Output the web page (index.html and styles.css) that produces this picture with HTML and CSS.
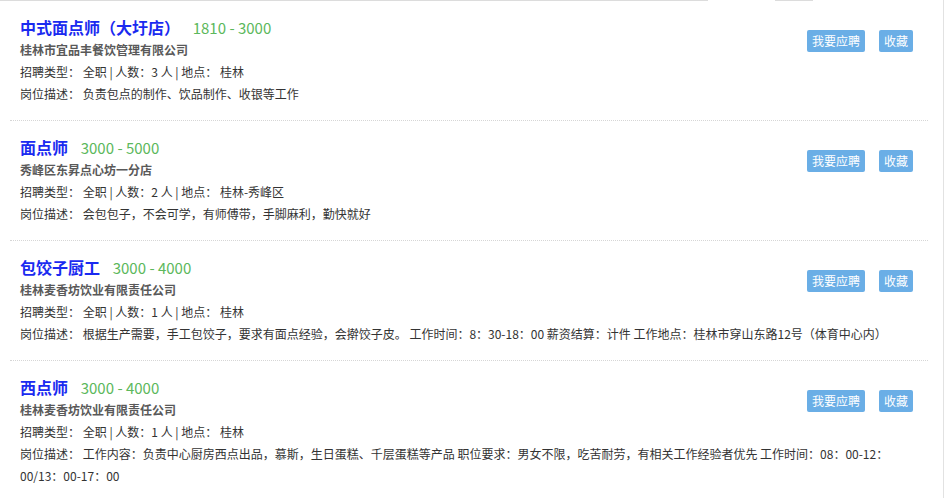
FILE: index.html
```html
<!DOCTYPE html>
<html lang="zh-CN">
<head>
  <meta charset="UTF-8">
  <meta name="viewport" content="width=device-width, initial-scale=1.0">
  <title>招聘信息</title>
  <link rel="stylesheet" href="styles.css">
</head>
<body>

  <div class="page">
    <div class="topline"></div>
    <ul class="job-list">
      <li class="job">
        <div class="actions">
          <a href="#" class="btn">我要应聘</a>
          <a href="#" class="btn">收藏</a>
        </div>
        <div class="job-title">
          <a href="#" class="name">中式面点师（大圩店）</a>
          <span class="salary">1810 - 3000</span>
        </div>
        <div class="company">桂林市宜品丰餐饮管理有限公司</div>
        <div class="line">招聘类型： 全职 | 人数：3 人 | 地点： 桂林</div>
        <div class="line">岗位描述： 负责包点的制作、饮品制作、收银等工作</div>
      </li>

      <li class="job">
        <div class="actions">
          <a href="#" class="btn">我要应聘</a>
          <a href="#" class="btn">收藏</a>
        </div>
        <div class="job-title">
          <a href="#" class="name">面点师</a>
          <span class="salary">3000 - 5000</span>
        </div>
        <div class="company">秀峰区东昇点心坊一分店</div>
        <div class="line">招聘类型： 全职 | 人数：2 人 | 地点： 桂林-秀峰区</div>
        <div class="line">岗位描述： 会包包子，不会可学，有师傅带，手脚麻利，勤快就好</div>
      </li>

      <li class="job">
        <div class="actions">
          <a href="#" class="btn">我要应聘</a>
          <a href="#" class="btn">收藏</a>
        </div>
        <div class="job-title">
          <a href="#" class="name">包饺子厨工</a>
          <span class="salary">3000 - 4000</span>
        </div>
        <div class="company">桂林麦香坊饮业有限责任公司</div>
        <div class="line">招聘类型： 全职 | 人数：1 人 | 地点： 桂林</div>
        <div class="line">岗位描述： 根据生产需要，手工包饺子，要求有面点经验，会擀饺子皮。 工作时间：8：30-18：00 薪资结算：计件 工作地点：桂林市穿山东路12号（体育中心内）</div>
      </li>

      <li class="job">
        <div class="actions">
          <a href="#" class="btn">我要应聘</a>
          <a href="#" class="btn">收藏</a>
        </div>
        <div class="job-title">
          <a href="#" class="name">西点师</a>
          <span class="salary">3000 - 4000</span>
        </div>
        <div class="company">桂林麦香坊饮业有限责任公司</div>
        <div class="line">招聘类型： 全职 | 人数：1 人 | 地点： 桂林</div>
        <div class="line">岗位描述： 工作内容：负责中心厨房西点出品，慕斯，生日蛋糕、千层蛋糕等产品 职位要求：男女不限，吃苦耐劳，有相关工作经验者优先 工作时间：08：00-12：00/13：00-17：00</div>
      </li>
    </ul>
  </div>

</body>
</html>
```

FILE: styles.css
```css
body {
  margin: 0;
  font-family: "Noto Sans CJK SC", "Noto Sans", sans-serif;
  font-size: 12px;
  color: #333;
  background: #fff;
}
.page {
  min-height: 498px;
  border-right: 1px solid #e2e2e2;
}
/* linha cinza do topo */
.topline {
  height: 1px;
  background: linear-gradient(to right, #dcdcdc 0, #dcdcdc 708px, transparent 708px, transparent 775px, #dcdcdc 775px, #dcdcdc 813px, transparent 813px);
}
.job-list {
  list-style: none;
  margin: 0;
  padding: 0 0 0 10px;
  width: 918px;
}
.job {
  padding: 15px 15px 15px 10px;
  border-bottom: 1px dotted #d6d6d6;
}
.job:last-child {
  border-bottom: none;
}
.actions {
  float: right;
  display: flex;
  gap: 14px;
  margin-top: 14px;
}
.btn {
  display: block;
  height: 22px;
  line-height: 22px;
  padding: 0 5px;
  background: #6aaee6;
  color: #fff;
  font-size: 12px;
  border-radius: 2px;
  text-decoration: none;
}
.job-title {
  height: 23px;
  line-height: 23px;
}
.name {
  font-size: 16px;
  font-weight: bold;
  color: #1a2af0;
  text-decoration: none;
}
.salary {
  margin-left: 10px;
  font-size: 15px;
  color: #5cb85c;
}
.company {
  line-height: 22px;
  font-weight: bold;
  color: #595959;
}
.line {
  line-height: 22px;
}
```
